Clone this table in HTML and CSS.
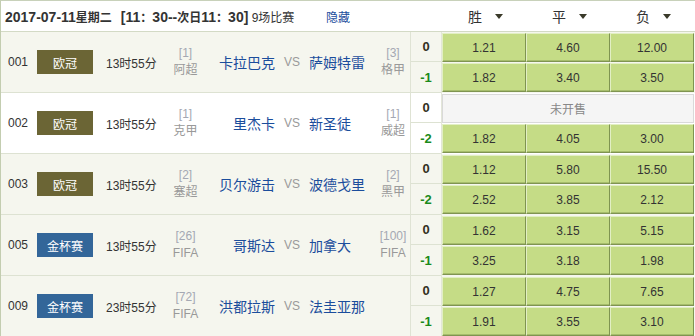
FILE: index.html
```html
<!DOCTYPE html>
<html lang="zh-CN">
<head>
<meta charset="utf-8">
<title>比赛列表</title>
<link rel="stylesheet" href="styles.css">
</head>
<body>
<div class="board">
  <div class="head">
    <div class="head-info">
      <span class="title"><b>2017-07-11<span class="cj">星期二</span></b><b class="span">[11<span class="cj">：</span>30--<span class="cj">次日</span>11<span class="cj">：</span>30]</b> <span class="count">9<span class="cj">场比赛</span></span></span>
      <a class="hide">隐藏</a>
    </div>
    <div class="head-hc"></div>
    <div class="head-odds">
      <div class="hcol">胜<i class="arr"></i></div>
      <div class="hcol">平<i class="arr"></i></div>
      <div class="hcol">负<i class="arr"></i></div>
    </div>
  </div>

  <div class="match">
    <div class="info">
      <span class="num">001</span>
      <span class="badge olive">欧冠</span>
      <span class="time">13时55分</span>
      <span class="rank"><span class="rk">[1]</span><span class="lg">阿超</span></span>
      <span class="home">卡拉巴克</span>
      <span class="vs">VS</span>
      <span class="away">萨姆特雷</span>
      <span class="rank"><span class="rk">[3]</span><span class="lg">格甲</span></span>
    </div>
    <div class="hc"><div class="hcc zero">0</div><div class="hcc neg">-1</div></div>
    <div class="odds">
      <div class="line"><span class="o">1.21</span><span class="o">4.60</span><span class="o">12.00</span></div>
      <div class="line"><span class="o">1.82</span><span class="o">3.40</span><span class="o">3.50</span></div>
    </div>
  </div>

  <div class="match white">
    <div class="info">
      <span class="num">002</span>
      <span class="badge olive">欧冠</span>
      <span class="time">13时55分</span>
      <span class="rank"><span class="rk">[1]</span><span class="lg">克甲</span></span>
      <span class="home">里杰卡</span>
      <span class="vs">VS</span>
      <span class="away">新圣徒</span>
      <span class="rank"><span class="rk">[1]</span><span class="lg">威超</span></span>
    </div>
    <div class="hc"><div class="hcc zero">0</div><div class="hcc neg">-2</div></div>
    <div class="odds">
      <div class="line"><span class="closed">未开售</span></div>
      <div class="line"><span class="o">1.82</span><span class="o">4.05</span><span class="o">3.00</span></div>
    </div>
  </div>

  <div class="match">
    <div class="info">
      <span class="num">003</span>
      <span class="badge olive">欧冠</span>
      <span class="time">13时55分</span>
      <span class="rank"><span class="rk">[2]</span><span class="lg">塞超</span></span>
      <span class="home">贝尔游击</span>
      <span class="vs">VS</span>
      <span class="away">波德戈里</span>
      <span class="rank"><span class="rk">[2]</span><span class="lg">黑甲</span></span>
    </div>
    <div class="hc"><div class="hcc zero">0</div><div class="hcc neg">-2</div></div>
    <div class="odds">
      <div class="line"><span class="o">1.12</span><span class="o">5.80</span><span class="o">15.50</span></div>
      <div class="line"><span class="o">2.52</span><span class="o">3.85</span><span class="o">2.12</span></div>
    </div>
  </div>

  <div class="match">
    <div class="info">
      <span class="num">005</span>
      <span class="badge blue">金杯赛</span>
      <span class="time">13时55分</span>
      <span class="rank"><span class="rk">[26]</span><span class="lg">FIFA</span></span>
      <span class="home">哥斯达</span>
      <span class="vs">VS</span>
      <span class="away">加拿大</span>
      <span class="rank"><span class="rk">[100]</span><span class="lg">FIFA</span></span>
    </div>
    <div class="hc"><div class="hcc zero">0</div><div class="hcc neg">-1</div></div>
    <div class="odds">
      <div class="line"><span class="o">1.62</span><span class="o">3.15</span><span class="o">5.15</span></div>
      <div class="line"><span class="o">3.25</span><span class="o">3.18</span><span class="o">1.98</span></div>
    </div>
  </div>

  <div class="match">
    <div class="info">
      <span class="num">009</span>
      <span class="badge blue">金杯赛</span>
      <span class="time">23时55分</span>
      <span class="rank"><span class="rk">[72]</span><span class="lg">FIFA</span></span>
      <span class="home">洪都拉斯</span>
      <span class="vs">VS</span>
      <span class="away">法圭亚那</span>
      <span class="rank"></span>
    </div>
    <div class="hc"><div class="hcc zero">0</div><div class="hcc neg">-1</div></div>
    <div class="odds">
      <div class="line"><span class="o">1.27</span><span class="o">4.75</span><span class="o">7.65</span></div>
      <div class="line"><span class="o">1.91</span><span class="o">3.55</span><span class="o">3.10</span></div>
    </div>
  </div>
</div>
</body>
</html>
```

FILE: styles.css
```css
* { box-sizing: border-box; }
html, body { margin: 0; padding: 0; background: #fff; }
body {
  font-family: "Liberation Sans", "Noto Sans CJK SC", sans-serif;
  font-size: 12px;
  color: #333;
}
.board {
  width: 695px;
  border-left: 1px solid #c3cdb0;
  border-top: 1px solid #c8d1ba;
}
.head {
  display: flex;
  height: 31px;
  background: #fff;
  border-bottom: 1px solid #d3dac5;
}
.head-info {
  width: 410px;
  display: grid;
  grid-template-columns: 325px auto;
  align-items: center;
}
.title {
  padding-left: 4px;
  white-space: nowrap;
  color: #333;
}
.title b {
  font-size: 14px;
  font-weight: bold;
}
.title .cj { font-size: 12px; }
.title .span { margin-left: 9px; }
.count { font-size: 12px; }
.hide {
  color: #1b4d9c;
  font-size: 12px;
}
.head-hc { width: 31px; }
.head-odds {
  display: grid;
  grid-template-columns: repeat(3, 84px);
  align-items: center;
}
.hcol {
  display: flex;
  justify-content: center;
  align-items: center;
  font-size: 14px;
  color: #333;
  padding-left: 3px;
}
.arr {
  display: inline-block;
  margin-left: 13px;
  width: 0;
  height: 0;
  border-left: 4.5px solid transparent;
  border-right: 4.5px solid transparent;
  border-top: 5px solid #3a3a2a;
}

.match {
  display: flex;
  height: 61px;
  background: #f5f6ee;
}
.match.white { background: #fff; }
.info {
  width: 410px;
  display: grid;
  grid-template-columns: 36px 56px 69px 47px 66px 34px 67px 34px;
  align-items: center;
  border-right: 1px solid #dfe3d4;
  border-bottom: 1px solid #dde2d2;
}
.num { padding-left: 7px; color: #333; }
.badge {
  height: 24px;
  display: flex;
  align-items: center;
  justify-content: center;
  color: #fff;
  font-size: 12px;
}
.badge.olive { background: #6b6535; }
.badge.blue { background: #336699; }
.time { padding-left: 13px; white-space: nowrap; }
.rank {
  display: flex;
  flex-direction: column;
  align-items: center;
  line-height: 17px;
  color: #999;
  white-space: nowrap;
}
.rk { color: #a4a8b3; }
.lg { color: #999; }
.home, .away {
  font-size: 14px;
  color: #1b4d9c;
  white-space: nowrap;
}
.home { text-align: right; }
.vs { text-align: center; color: #9a9a9a; }
.hc {
  width: 31px;
  border-right: 1px solid #e3e6d9;
  display: flex;
  flex-direction: column;
}
.hcc {
  height: 30px;
  display: flex;
  align-items: center;
  justify-content: center;
  font-weight: bold;
  font-size: 13px;
  border-bottom: 1px solid #dde2d2;
}
.hcc.neg { height: 31px; }
.hcc.zero { color: #33301e; }
.hcc.neg { color: #1a8a1a; }
.odds {
  width: 252px;
  padding: 1px 0;
  display: grid;
  grid-template-rows: 29px 29px;
  row-gap: 1px;
}
.line {
  display: grid;
  grid-template-columns: repeat(3, 84px);
}
.o {
  display: flex;
  align-items: center;
  justify-content: center;
  background: #c5dc86;
  border-top: 1px solid #e2efc4;
  border-left: 1px solid #e2efc4;
  border-right: 1px solid #7f9451;
  border-bottom: 1px solid #7f9451;
  box-shadow: inset 0 -1px 0 #a6bd6c;
  color: #333;
  font-size: 12px;
}
.closed {
  grid-column: 1 / -1;
  display: flex;
  align-items: center;
  justify-content: center;
  background: #f5f5f5;
  border: 1px solid #d9d9d9;
  color: #888;
  font-size: 12px;
}
```
